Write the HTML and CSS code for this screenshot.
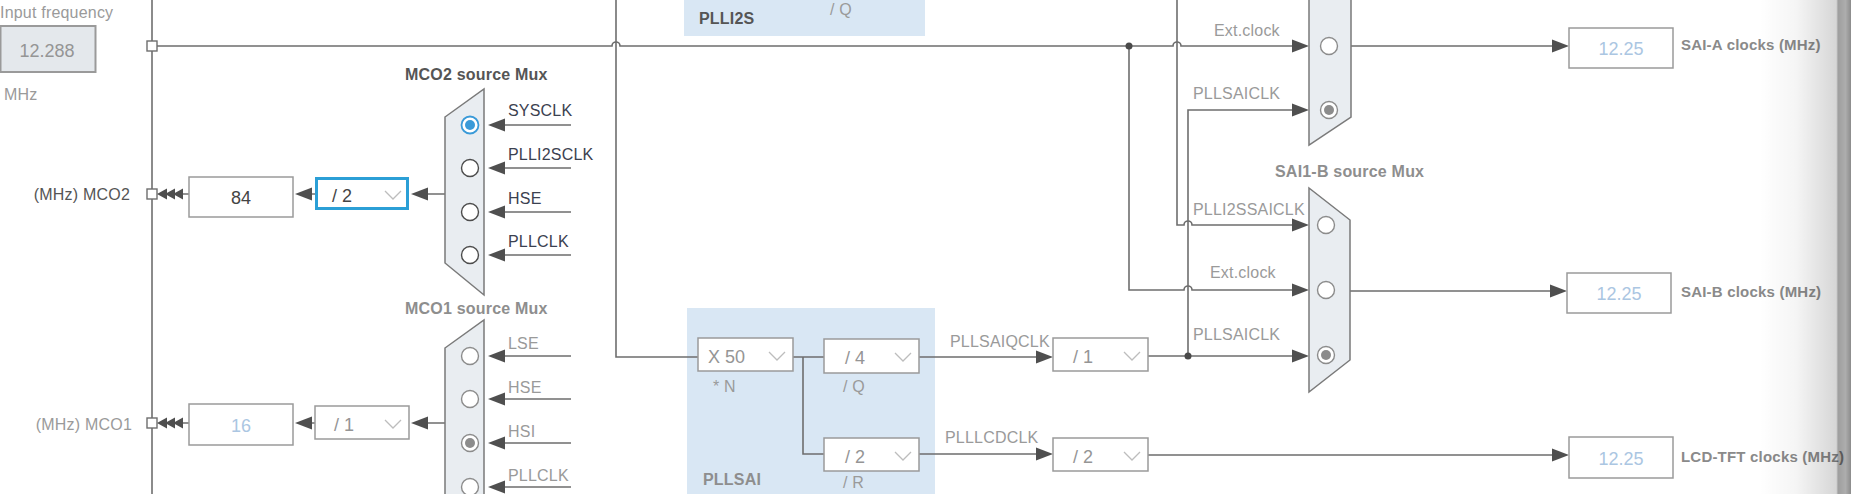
FILE: index.html
```html
<!DOCTYPE html>
<html lang="en">
<head>
    <meta charset="UTF-8">
    <title>Clock Configuration - SAI / MCO</title>
    <link rel="stylesheet" href="styles.css">
</head>
<body>
    <div class="canvas">
        <svg class="diagram" width="1851" height="494" viewBox="0 0 1851 494">
            <!-- PLL panels -->
            <rect class="panel" x="684" y="0" width="241" height="36"/>
            <rect class="panel" x="687" y="308" width="248" height="190"/>

            <!-- wires -->
            <path class="wire" d="M152,0 V494"/>
            <path class="wire" d="M157,46 H612 a4,4 0 0 1 8,0 H1173 a4,4 0 0 1 8,0 H1295"/>
            <path class="wire" d="M616,0 V357 H698"/>
            <path class="wire" d="M1129,46 V290 H1184 a4,4 0 0 1 8,0 H1295"/>
            <path class="wire" d="M1177,0 V225 H1184 a4,4 0 0 1 8,0 H1295"/>
            <path class="wire" d="M1295,110 H1188 V356"/>
            <path class="wire" d="M793,357 H824 M803,357 V454 H824"/>
            <path class="wire" d="M919,357 H1040 M919,454 H1040"/>
            <path class="wire" d="M1148,356 H1295 M1148,455 H1555"/>
            <path class="wire" d="M1351,46 H1555 M1349,291 H1553"/>
            <!-- MCO2 -->
            <path class="wire" d="M445,194 H420 M315,194 H305 M189,194 H170"/>
            <path class="wire" d="M571,125 H500 M571,168 H500 M571,212 H500 M571,255 H500"/>
            <!-- MCO1 -->
            <path class="wire" d="M445,423 H420 M315,423 H305 M189,423 H170"/>
            <path class="wire" d="M571,356 H500 M571,399 H500 M571,443 H500 M571,487 H500"/>

            <circle class="dot" cx="1129" cy="46" r="3.5"/>
            <circle class="dot" cx="1188" cy="356" r="3.5"/>

            <!-- bus ports -->
            <rect class="port" x="147" y="41" width="10" height="10"/>
            <rect class="port" x="147" y="189" width="10" height="10"/>
            <rect class="port" x="147" y="418" width="10" height="10"/>

            <!-- arrow heads -->
            <g class="arrow">
                <polygon points="1292,39.5 1309,46 1292,52.5"/>
                <polygon points="1292,103.5 1309,110 1292,116.5"/>
                <polygon points="1292,218.5 1309,225 1292,231.5"/>
                <polygon points="1292,283.5 1309,290 1292,296.5"/>
                <polygon points="1292,349.5 1309,356 1292,362.5"/>
                <polygon points="1036,350.5 1053,357 1036,363.5"/>
                <polygon points="1036,447.5 1053,454 1036,460.5"/>
                <polygon points="1552,39.5 1569,46 1552,52.5"/>
                <polygon points="1550,284.5 1567,291 1550,297.5"/>
                <polygon points="1552,448.5 1569,455 1552,461.5"/>

                <polygon points="505,118.5 488,125 505,131.5"/>
                <polygon points="505,161.5 488,168 505,174.5"/>
                <polygon points="505,205.5 488,212 505,218.5"/>
                <polygon points="505,248.5 488,255 505,261.5"/>
                <polygon points="428,187.5 411,194 428,200.5"/>
                <polygon points="312,187.5 295,194 312,200.5"/>
                <polygon points="167,188.5 157,194 167,199.5"/>
                <polygon points="175,188.5 165,194 175,199.5"/>
                <polygon points="183,188.5 173,194 183,199.5"/>

                <polygon points="505,349.5 488,356 505,362.5"/>
                <polygon points="505,392.5 488,399 505,405.5"/>
                <polygon points="505,436.5 488,443 505,449.5"/>
                <polygon points="505,480.5 488,487 505,493.5"/>
                <polygon points="428,416.5 411,423 428,429.5"/>
                <polygon points="312,416.5 295,423 312,429.5"/>
                <polygon points="167,417.5 157,423 167,428.5"/>
                <polygon points="175,417.5 165,423 175,428.5"/>
                <polygon points="183,417.5 173,423 183,428.5"/>
            </g>

            <!-- muxes -->
            <polygon class="mux" points="445,117 484,89 484,295 445,263"/>
            <polygon class="mux" points="445,348 484,320 484,540 445,512"/>
            <polygon class="mux" points="1309,-60 1351,-30 1351,117 1309,145"/>
            <polygon class="mux" points="1309,188 1350,220 1350,360 1309,392"/>

            <!-- radios -->
            <circle class="radio on-blue" cx="470" cy="125" r="8.5"/>
            <circle class="pip-blue" cx="470" cy="125" r="5"/>
            <circle class="radio" cx="470" cy="168" r="8.5"/>
            <circle class="radio" cx="470" cy="212" r="8.5"/>
            <circle class="radio" cx="470" cy="255" r="8.5"/>

            <circle class="radio off" cx="470" cy="356" r="8.5"/>
            <circle class="radio off" cx="470" cy="399" r="8.5"/>
            <circle class="radio off" cx="470" cy="443" r="8.5"/>
            <circle class="pip" cx="470" cy="443" r="5"/>
            <circle class="radio off" cx="470" cy="487" r="8.5"/>

            <circle class="radio off" cx="1329" cy="46" r="8.5"/>
            <circle class="radio off" cx="1329" cy="110" r="8.5"/>
            <circle class="pip" cx="1329" cy="110" r="5"/>
            <circle class="radio off" cx="1326" cy="225" r="8.5"/>
            <circle class="radio off" cx="1326" cy="290" r="8.5"/>
            <circle class="radio off" cx="1326" cy="355" r="8.5"/>
            <circle class="pip" cx="1326" cy="355" r="5"/>

            <!-- boxes -->
            <rect class="box input" x="0.5" y="26" width="95" height="46"/>
            <rect class="box" x="189" y="177" width="104" height="40"/>
            <rect class="box active" x="316.5" y="178.5" width="91" height="30"/>
            <rect class="box" x="189" y="404" width="104" height="41"/>
            <rect class="box" x="315" y="406" width="94" height="33"/>
            <rect class="box" x="698" y="338" width="95" height="33"/>
            <rect class="box" x="824" y="339" width="95" height="34"/>
            <rect class="box" x="824" y="438" width="95" height="33"/>
            <rect class="box" x="1053" y="338" width="95" height="33"/>
            <rect class="box" x="1053" y="438" width="95" height="33"/>
            <rect class="box" x="1569" y="28" width="104" height="40"/>
            <rect class="box" x="1567" y="273" width="104" height="40"/>
            <rect class="box" x="1569" y="437" width="104" height="41"/>

            <!-- dropdown chevrons -->
            <g class="chev">
                <path d="M385,191 L393,199 L401,191"/>
                <path d="M385,420 L393,428 L401,420"/>
                <path d="M769,352 L777,360 L785,352"/>
                <path d="M895,353 L903,361 L911,353"/>
                <path d="M895,452 L903,460 L911,452"/>
                <path d="M1124,352 L1132,360 L1140,352"/>
                <path d="M1124,452 L1132,460 L1140,452"/>
            </g>

            <!-- labels -->
            <text class="t" x="0" y="18">Input frequency</text>
            <text class="val dim" x="47" y="57" text-anchor="middle">12.288</text>
            <text class="t" x="4" y="100">MHz</text>

            <text class="t tb dark" x="405" y="80">MCO2 source Mux</text>
            <text class="t dark" x="130" y="200" text-anchor="end">(MHz) MCO2</text>
            <text class="t navy" x="508" y="116">SYSCLK</text>
            <text class="t navy" x="508" y="160">PLLI2SCLK</text>
            <text class="t navy" x="508" y="204">HSE</text>
            <text class="t navy" x="508" y="247">PLLCLK</text>
            <text class="val dark" x="241" y="204" text-anchor="middle">84</text>
            <text class="val dark" x="332" y="202">/ 2</text>

            <text class="t tb" x="405" y="314">MCO1 source Mux</text>
            <text class="t" x="132" y="430" text-anchor="end">(MHz) MCO1</text>
            <text class="t" x="508" y="349">LSE</text>
            <text class="t" x="508" y="393">HSE</text>
            <text class="t" x="508" y="437">HSI</text>
            <text class="t" x="508" y="481">PLLCLK</text>
            <text class="val blue" x="241" y="432" text-anchor="middle">16</text>
            <text class="val dim" x="334" y="431">/ 1</text>

            <text class="t tb dark" x="699" y="24">PLLI2S</text>
            <text class="t" x="830" y="15">/ Q</text>

            <text class="val dim" x="708" y="363">X 50</text>
            <text class="t" x="713" y="392">* N</text>
            <text class="val dim" x="845" y="364">/ 4</text>
            <text class="t" x="843" y="392">/ Q</text>
            <text class="val dim" x="845" y="463">/ 2</text>
            <text class="t" x="843" y="488">/ R</text>
            <text class="t tb" x="703" y="485">PLLSAI</text>

            <text class="t" x="950" y="347">PLLSAIQCLK</text>
            <text class="t" x="945" y="443">PLLLCDCLK</text>
            <text class="val dim" x="1073" y="363">/ 1</text>
            <text class="val dim" x="1073" y="463">/ 2</text>

            <text class="t" x="1214" y="36">Ext.clock</text>
            <text class="t" x="1193" y="99">PLLSAICLK</text>
            <text class="t tb" x="1275" y="177">SAI1-B source Mux</text>
            <text class="t" x="1193" y="215">PLLI2SSAICLK</text>
            <text class="t" x="1210" y="278">Ext.clock</text>
            <text class="t" x="1193" y="340">PLLSAICLK</text>

            <text class="val blue" x="1621" y="55" text-anchor="middle">12.25</text>
            <text class="val blue" x="1619" y="300" text-anchor="middle">12.25</text>
            <text class="val blue" x="1621" y="465" text-anchor="middle">12.25</text>
            <text class="t tb out" x="1681" y="50">SAI-A clocks (MHz)</text>
            <text class="t tb out" x="1681" y="297">SAI-B clocks (MHz)</text>
            <text class="t tb out" x="1681" y="462">LCD-TFT clocks (MHz)</text>
        </svg>
        <div class="edge-shadow"></div>
    </div>
</body>
</html>
```
FILE: styles.css
```css
body {
    margin: 0;
    padding: 0;
    background-color: #fff;
    font-family: "Liberation Sans", Arial, sans-serif;
    overflow: hidden;
}
.canvas {
    position: relative;
    width: 1851px;
    height: 494px;
    overflow: hidden;
}
.diagram {
    display: block;
}
.panel {
    fill: #d9e7f4;
}
.wire {
    fill: none;
    stroke: #6e6e6e;
    stroke-width: 1.6;
}
.dot {
    fill: #4a4a4a;
}
.port {
    fill: #fff;
    stroke: #6e6e6e;
    stroke-width: 1.4;
}
.arrow polygon {
    fill: #4f4f4f;
}
.mux {
    fill: #e9edf1;
    stroke: #7a7a7a;
    stroke-width: 1.5;
}
.radio {
    fill: #fff;
    stroke: #4c4c4c;
    stroke-width: 1.4;
}
.radio.off {
    stroke: #8c8c8c;
}
.radio.on-blue {
    stroke: #3a9ad8;
    stroke-width: 1.8;
}
.pip {
    fill: #8c8c8c;
}
.pip-blue {
    fill: #3a9ad8;
}
.box {
    fill: #fff;
    stroke: #9a9a9a;
    stroke-width: 1.5;
}
.box.input {
    fill: #e4e8ec;
    stroke: #9a9a9a;
    stroke-width: 2;
}
.box.active {
    stroke: #2b9fd6;
    stroke-width: 3;
}
.chev path {
    fill: none;
    stroke: #bdbdbd;
    stroke-width: 1.3;
}
.t {
    font-family: "Liberation Sans", Arial, sans-serif;
    font-size: 16px;
    fill: #9a9a9a;
    letter-spacing: 0.2px;
}
.tb {
    font-weight: bold;
    fill: #8e8e8e;
}
.dark {
    fill: #555;
}
.navy {
    fill: #3b4150;
}
.out {
    font-size: 15px;
    fill: #8a8a8a;
}
.val {
    font-family: "Liberation Sans", Arial, sans-serif;
    font-size: 18px;
}
.val.dim {
    fill: #959595;
}
.val.dark {
    fill: #444;
}
.val.blue {
    fill: #abc6e2;
}
.edge-shadow {
    position: absolute;
    top: 0;
    right: 0;
    width: 92px;
    height: 100%;
    background: linear-gradient(to right,
        rgba(0, 0, 0, 0) 0,
        rgba(0, 0, 0, 0.04) 40%,
        rgba(0, 0, 0, 0.16) 84%,
        rgba(0, 0, 0, 0.38) 86%,
        rgba(0, 0, 0, 0.32) 94%,
        rgba(0, 0, 0, 0.45) 100%);
    pointer-events: none;
}
```
